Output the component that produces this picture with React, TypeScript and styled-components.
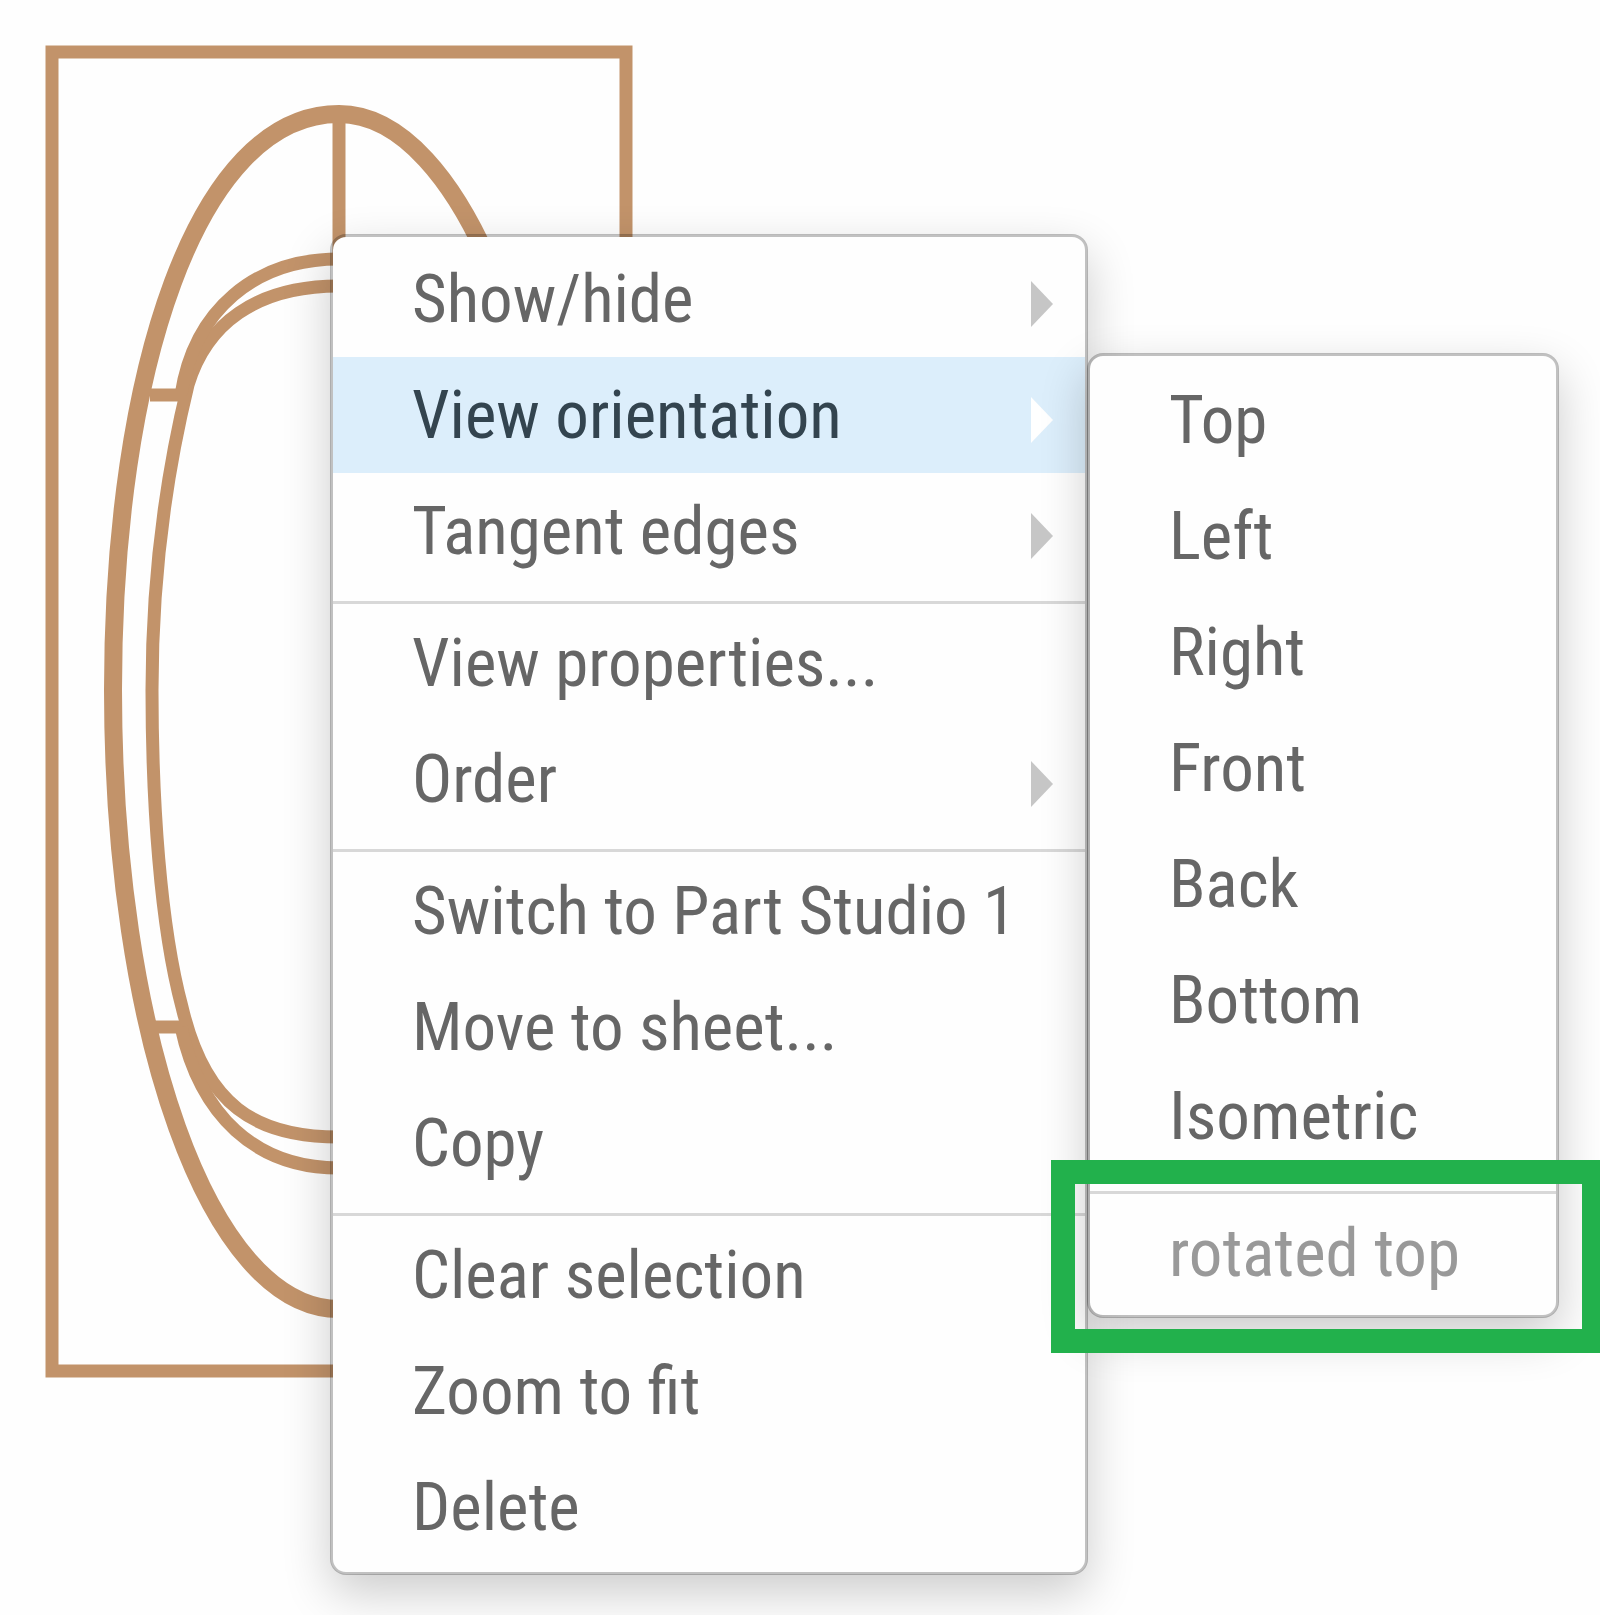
import React from "react";
import styled, { createGlobalStyle, css } from "styled-components";

const GlobalStyle = createGlobalStyle`
  *, *::before, *::after { box-sizing: border-box; }
  body {
    margin: 0;
    background: #fefefe;
    font-family: "Roboto Condensed", "Liberation Sans Narrow", "Arial Narrow", Roboto, sans-serif;
  }
`;

const Canvas = styled.main`
  position: relative;
  min-height: 100vh;
  overflow: hidden;
`;

const Drawing = styled.svg`
  display: block;
  width: 680px;
  height: 1400px;
  fill: none;
  stroke: #c2936a;
`;

const menuSurface = css`
  position: absolute;
  margin: 0;
  list-style: none;
  background: #fefefe;
  background-clip: padding-box;
  border: 3px solid rgba(0, 0, 0, 0.24);
  border-radius: 16px;
  box-shadow: 0 18px 48px rgba(0, 0, 0, 0.2);
`;

const ContextMenu = styled.ul`
  ${menuSurface}
  top: 234px;
  left: 330px;
  width: 758px;
  padding: 4px 0 7px;
`;

const SubMenu = styled.ul`
  ${menuSurface}
  top: -4px;
  left: calc(100% + 2px);
  width: 472px;
  padding: 6px 0 4px;
`;

const MenuRow = styled.li`
  position: relative;
`;

const MenuButton = styled.button<{ $active?: boolean }>`
  display: flex;
  align-items: center;
  justify-content: space-between;
  width: 100%;
  height: 116px;
  padding: 0 32px 0 79px;
  border: 0;
  background: ${({ $active }) => ($active ? "#dceefb" : "transparent")};
  color: ${({ $active }) => ($active ? "#33444f" : "#666")};
  font: inherit;
  font-size: 67px;
  line-height: 80px;
  text-align: left;
  white-space: nowrap;

  &:disabled {
    color: #999;
  }
`;

const Arrow = styled.svg<{ $active?: boolean }>`
  width: 22px;
  height: 46px;
  margin-top: 10px;
  fill: ${({ $active }) => ($active ? "#fff" : "#c6c6c6")};
`;

const Separator = styled.li<{ $space?: number }>`
  height: 3px;
  margin: ${({ $space = 12 }) => $space}px 0 1px;
  background: #d8d8d8;
`;

const Callout = styled.div`
  position: absolute;
  right: -50px;
  bottom: -42px;
  left: -39px;
  height: 193px;
  border: 24px solid #22b14c;
  pointer-events: none;
`;

type Entry = { label: string; children?: boolean; disabled?: boolean } | null;

const orientations: Entry[] = [
  { label: "Top" },
  { label: "Left" },
  { label: "Right" },
  { label: "Front" },
  { label: "Back" },
  { label: "Bottom" },
  { label: "Isometric" },
  null,
  { label: "rotated top", disabled: true },
];

const actions: Entry[] = [
  { label: "Show/hide", children: true },
  { label: "View orientation", children: true },
  { label: "Tangent edges", children: true },
  null,
  { label: "View properties..." },
  { label: "Order", children: true },
  null,
  { label: "Switch to Part Studio 1" },
  { label: "Move to sheet..." },
  { label: "Copy" },
  null,
  { label: "Clear selection" },
  { label: "Zoom to fit" },
  { label: "Delete" },
];

function InnerLoop() {
  return (
    <g strokeWidth="13">
      <path d="M339 286C255 286 206 325 188 385C160 500 152 600 152 690C152 800 160 925 182 1007C205 1105 255 1137 339 1137" />
      <path d="M339 259C255 259 194 310 181 395" />
      <path d="M181 1027C200 1115 255 1168 339 1168" />
      <path d="M150 395H184M150 1027H182" />
    </g>
  );
}

function PartView() {
  return (
    <Drawing viewBox="0 0 680 1400" role="img" aria-label="Drawing view">
      <rect x="52" y="52" width="574" height="1319" strokeWidth="13" />
      <path
        strokeWidth="18"
        d="M339 114C197 114 113 372 113 690C113 1032 209 1309 339 1309C469 1309 565 1032 565 690C565 372 461 114 339 114Z"
      />
      <InnerLoop />
      <g transform="translate(678 0) scale(-1 1)">
        <InnerLoop />
      </g>
      <path strokeWidth="13" d="M339 114V259" />
    </Drawing>
  );
}

export default function App() {
  const open = "View orientation";
  return (
    <>
      <GlobalStyle />
      <Canvas>
        <PartView />
        <ContextMenu>
          {actions.map((item, i) =>
            item === null ? (
              <Separator key={i} role="separator" />
            ) : (
              <MenuRow key={i}>
                <MenuButton type="button" $active={item.label === open}>
                  {item.label}
                  {item.children && (
                    <Arrow viewBox="0 0 22 46" $active={item.label === open} aria-hidden="true">
                      <path d="M0 0L22 23L0 46Z" />
                    </Arrow>
                  )}
                </MenuButton>
                {item.label === open && (
                  <SubMenu>
                    {orientations.map((view, j) =>
                      view === null ? (
                        <Separator key={j} role="separator" $space={17} />
                      ) : (
                        <MenuRow key={j}>
                          <MenuButton type="button" disabled={view.disabled}>
                            {view.label}
                          </MenuButton>
                          {view.disabled && <Callout />}
                        </MenuRow>
                      )
                    )}
                  </SubMenu>
                )}
              </MenuRow>
            )
          )}
        </ContextMenu>
      </Canvas>
    </>
  );
}
